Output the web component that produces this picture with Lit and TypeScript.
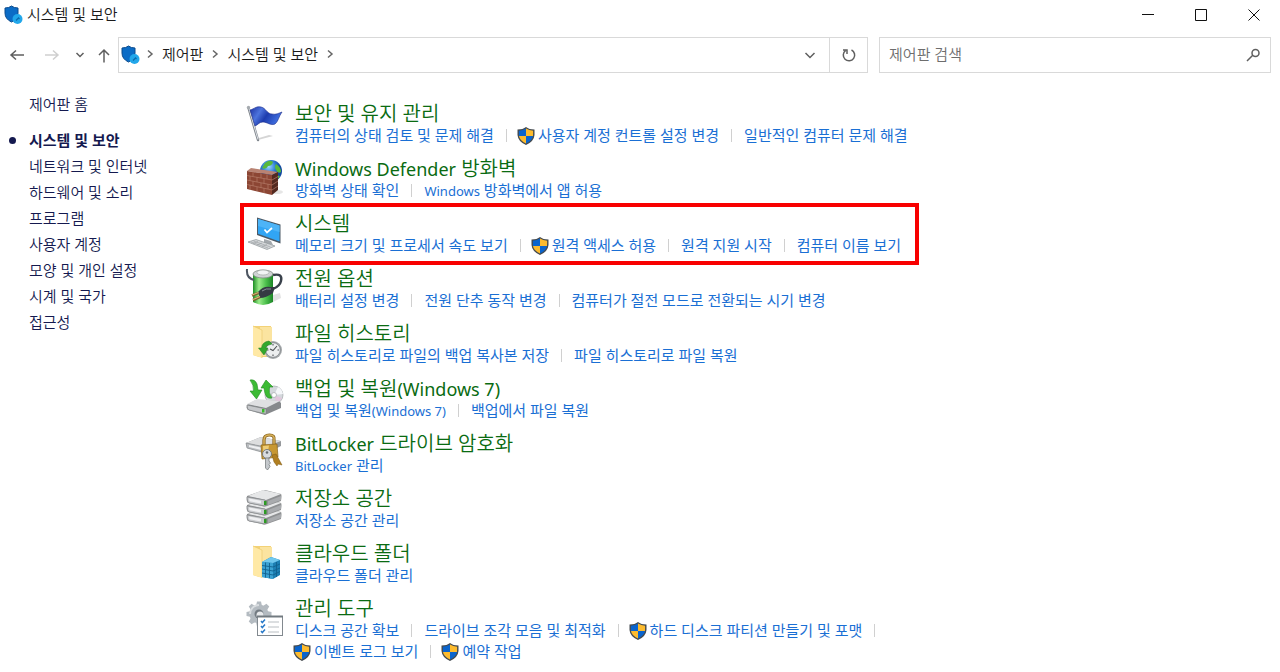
import { LitElement, html, svg, css, nothing } from "lit";
import { customElement, property } from "lit/decorators.js";

interface Task {
  text: string;
  shield?: boolean;
}

interface Category {
  icon: string;
  title: string;
  tasks: Task[];
  marked?: boolean;
}

const sections = [
  "시스템 및 보안",
  "네트워크 및 인터넷",
  "하드웨어 및 소리",
  "프로그램",
  "사용자 계정",
  "모양 및 개인 설정",
  "시계 및 국가",
  "접근성",
];

const categories: Category[] = [
  {
    icon: "flag",
    title: "보안 및 유지 관리",
    tasks: [
      { text: "컴퓨터의 상태 검토 및 문제 해결" },
      { text: "사용자 계정 컨트롤 설정 변경", shield: true },
      { text: "일반적인 컴퓨터 문제 해결" },
    ],
  },
  {
    icon: "firewall",
    title: "Windows Defender 방화벽",
    tasks: [{ text: "방화벽 상태 확인" }, { text: "Windows 방화벽에서 앱 허용" }],
  },
  {
    icon: "system",
    title: "시스템",
    marked: true,
    tasks: [
      { text: "메모리 크기 및 프로세서 속도 보기" },
      { text: "원격 액세스 허용", shield: true },
      { text: "원격 지원 시작" },
      { text: "컴퓨터 이름 보기" },
    ],
  },
  {
    icon: "power",
    title: "전원 옵션",
    tasks: [
      { text: "배터리 설정 변경" },
      { text: "전원 단추 동작 변경" },
      { text: "컴퓨터가 절전 모드로 전환되는 시기 변경" },
    ],
  },
  {
    icon: "history",
    title: "파일 히스토리",
    tasks: [
      { text: "파일 히스토리로 파일의 백업 복사본 저장" },
      { text: "파일 히스토리로 파일 복원" },
    ],
  },
  {
    icon: "backup",
    title: "백업 및 복원(Windows 7)",
    tasks: [{ text: "백업 및 복원(Windows 7)" }, { text: "백업에서 파일 복원" }],
  },
  {
    icon: "bitlocker",
    title: "BitLocker 드라이브 암호화",
    tasks: [{ text: "BitLocker 관리" }],
  },
  { icon: "storage", title: "저장소 공간", tasks: [{ text: "저장소 공간 관리" }] },
  { icon: "cloud", title: "클라우드 폴더", tasks: [{ text: "클라우드 폴더 관리" }] },
  {
    icon: "tools",
    title: "관리 도구",
    tasks: [
      { text: "디스크 공간 확보" },
      { text: "드라이브 조각 모음 및 최적화" },
      { text: "하드 디스크 파티션 만들기 및 포맷", shield: true },
      { text: "이벤트 로그 보기", shield: true },
      { text: "예약 작업", shield: true },
    ],
  },
];

/* Latin runs are set a little smaller than the Hangul around them. */
const mixed = (text: string) =>
  text
    .split(/([A-Za-z0-9()]+(?: [A-Za-z0-9()]+)*)/)
    .filter((part) => part)
    .map((part) => (/[A-Za-z0-9]/.test(part) ? html`<span class="latin">${part}</span>` : part));

const folder = svg`
  <path d="M8 3H26V34H14L8 32Z" fill="#f3d277"/>
  <path d="M15 4H27V33H15Z" fill="#fbe4a0"/>
  <path d="M8 3L17 7V35L8 32Z" fill="#ffe9a6"/>
  <path d="M8 3L17 7V35" fill="none" stroke="#eccb70" stroke-width=".7"/>`;

const slab = (y: number) => svg`
  <path d="M2 ${y + 7}L16 ${y + 2}Q18 ${y + 1} 20 ${y + 1}L36 ${y + 5}Q37 ${y + 6} 36 ${y + 12}L22 ${y + 17}Q19 ${y + 18} 17 ${y + 17}L3 ${y + 14}Q1 ${y + 13} 2 ${y + 7}Z" fill="#8e9092"/>
  <path d="M3 ${y + 7}L18 ${y + 1}L36 ${y + 5}L21 ${y + 11}Z" fill="#e6e7e8"/>
  <path d="M2 ${y + 8}L20 ${y + 11}V${y + 17}L4 ${y + 14}Q2 ${y + 13} 2 ${y + 8}Z" fill="#c9cbce" stroke="#85888b" stroke-width=".7"/>
  <path d="M4 ${y + 9.5}L16 ${y + 11.7}V${y + 14.5}L4.500 ${y + 12.3}Z" fill="#eff0f2"/>
  <path d="M19 ${y + 12}h2.500v4h-2.500Z" fill="#2c9a23"/>
  <path d="M23 ${y + 12}L36 ${y + 7}V${y + 11}L23 ${y + 16}Z" fill="#a9abae"/>`;

const pictures: Record<string, unknown> = {
  flag: svg`
    <defs><linearGradient id="flagBlue" x1="0" x2="1" y1="0" y2=".4">
      <stop offset="0" stop-color="#1b2fa0"/><stop offset=".35" stop-color="#4d74dd"/>
      <stop offset=".6" stop-color="#1d3cae"/><stop offset="1" stop-color="#3f6fe0"/>
    </linearGradient></defs>
    <path d="M13 37L28 33L24 32L14 35Z" fill="#d5d5d5"/>
    <path d="M3.500 5L13 37" stroke="#7f858c" stroke-width="2.400" stroke-linecap="round"/>
    <path d="M3.800 5L13 36.500" stroke="#dfe3e7" stroke-width="1"/>
    <path d="M5 7C9 6 11 3 16 4C21 5 22 11 27 11C31 12 34 10 37 9C34 13 33 19 30 21C26 23 22 19 18 19C14 19 13 22 10 23Z" fill="url(#flagBlue)" stroke="#1b2c8c" stroke-width=".6"/>
    <circle cx="3.500" cy="4.500" r="1.700" fill="#a6abb0"/>`,
  firewall: svg`
    <defs><radialGradient id="globe" cx=".4" cy=".3"><stop offset="0" stop-color="#9ed8ff"/><stop offset=".6" stop-color="#2f7fd6"/><stop offset="1" stop-color="#1149a0"/></radialGradient></defs>
    <ellipse cx="32" cy="34" rx="6" ry="2" fill="#e6e6e6"/>
    <circle cx="26" cy="13" r="11" fill="url(#globe)"/>
    <path d="M20 5Q25 1 28 4Q27 8 23 8Q21 12 17 10ZM31 6Q36 9 36 14Q33 16 31 12Q29 9 31 6ZM30 17L35 18Q33 22 30 23Z" fill="#58b83c"/>
    <path d="M2 13L6 10L33 14L27 17Z" fill="#b98373"/>
    <path d="M27 17L33 14V32L27 37Z" fill="#542a20"/>
    <path d="M2 13L27 17V37L2 31Z" fill="#8c4634"/>
    <path d="M2 17.500L27 22M2 22L27 27M2 26.500L27 32M8 14V18.500M16 15.500V20M22 16.500V21M5 18V22.500M12 19V24M19 20.500V25.500M8 23V28M16 25V30M23 26V31M5 27V32M12 29V33M19 30V35M27 22L33 18.500M27 27L33 23M27 32L33 28" stroke="#b47b69" stroke-width=".7" fill="none"/>`,
  system: svg`
    <path d="M19 26L26 28L28 32L19 30Z" fill="#a4a9ad"/>
    <path d="M12 4.500L35.500 11.500V30.500L12 22Z" fill="#4d5a66"/>
    <path d="M13 6L34.500 12.500V28.500L13 20.800Z" fill="#31a5f4"/>
    <path d="M13 6L34.500 12.500V19L13 13Z" fill="#4db4f7"/>
    <path d="M19.500 16.500L22 19.500L27 15" fill="none" stroke="#fff" stroke-width="1.700"/>
    <path d="M3 29L11 26.500L30 33L22 36.500Z" fill="#d5d8da" stroke="#8d9397" stroke-width=".7"/>
    <path d="M6 29L23 35M8.500 28L25.500 34M8 30.500L13 28.500M12 32L17 30M17 33.500L22 31.500" stroke="#989da1" stroke-width=".6"/>`,
  power: svg`
    <defs><linearGradient id="cell"><stop offset="0" stop-color="#1c8f23"/><stop offset=".3" stop-color="#9bec8b"/><stop offset=".65" stop-color="#4cc04c"/><stop offset="1" stop-color="#1b8426"/></linearGradient></defs>
    <path d="M28 34L36 30L35 25L28 27Z" fill="#e2e2e2"/>
    <path d="M8 6V34Q18 40 28 34V6Z" fill="url(#cell)"/>
    <ellipse cx="18" cy="6" rx="10" ry="4" fill="#cfd3d4" stroke="#7f8a83" stroke-width=".8"/>
    <ellipse cx="18" cy="4.500" rx="6" ry="2.500" fill="#f2f4f5" stroke="#9da5a0" stroke-width=".6"/>
    <path d="M2 1Q1 10 9 12" fill="none" stroke="#4d5661" stroke-width="2"/>
    <path d="M28 7Q38 5 36 13Q35 18 28 21" fill="none" stroke="#39414b" stroke-width="2.400"/>
    <path d="M13 24Q18 18 25 19L30 19L28 25Q21 30 15 30Z" fill="#353a43"/>
    <path d="M17 23Q21 20 26 21" stroke="#868d97" stroke-width="1" fill="none"/>
    <path d="M13.500 25L7 27.500M15 29L8 32" stroke="#7d5d2b" stroke-width="2.600"/>
    <path d="M13.500 24.600L7 27M15 28.600L8 31.500" stroke="#d7b878" stroke-width="1.100"/>`,
  history: svg`${folder}
    <circle cx="28" cy="27" r="9" fill="#a5a9ab"/>
    <circle cx="28" cy="27" r="7.300" fill="#eceeef" stroke="#74797c" stroke-width=".7"/>
    <path d="M28 21v1.500M28 31.500V33M22 27h1.500M32.500 27H34M32 23L28 27.500L25 26" stroke="#4d5154" stroke-width="1.100" fill="none"/>
    <path d="M24 18Q17 19 16.500 25H13.500L19 32L23 25H20.500Q21 22 27 21Z" fill="#34a82c" stroke="#1d7d1c" stroke-width=".5"/>`,
  backup: svg`
    <circle cx="29" cy="17" r="9" fill="#d4d8dc" stroke="#a4a8ab" stroke-width=".7"/>
    <path d="M29 17L33 9Q37 11 38 16Z" fill="#f6f7fa"/><path d="M29 17L37 20Q35 24 31 25.500Z" fill="#e3c6dc"/>
    <circle cx="29" cy="17" r="2.500" fill="#fff" stroke="#a4a8ab" stroke-width=".7"/>
    <path d="M2 27L11 22L34 23L36 25V30L20 37L3 32Q1 31 2 27Z" fill="#86898c"/>
    <path d="M2 26L12 21L35 23L21 30Z" fill="#dfe0e2"/>
    <path d="M2 27L21 31V36L4 32Q2 31 2 27Z" fill="#c6c8cb" stroke="#7a7d80" stroke-width=".6"/>
    <path d="M17 31h2.500v3.500h-2.500Z" fill="#38ba28"/>
    <path d="M5 2Q10 1 12 6L13 12H17L11.500 21L5 13H8.500Q9 7 5 2Z" fill="#3cbb34" stroke="#208b20" stroke-width=".6"/>
    <path d="M16 10L21 2L28 9H24.500Q23 15 27 20Q20 22 19 10Z" fill="#3cbb34" stroke="#208b20" stroke-width=".6"/>`,
  bitlocker: svg`
    <path d="M1 10L16 4L36 8V13L22 20L2 15Z" fill="#96999c"/>
    <path d="M1 10L16 4L36 8L20 14Z" fill="#dddedf"/>
    <path d="M1 10L20 14V20L2 15Z" fill="#b9bcbf" stroke="#84888b" stroke-width=".6"/>
    <path d="M4 12L16 14.500V17L4 14Z" fill="#eff0f2"/>
    <path d="M19 14V7Q19 2 24.500 2T29 7V14" fill="none" stroke="#8b641b" stroke-width="3.200"/>
    <path d="M19 14V7Q19 2 24.500 2T29 7V14" fill="none" stroke="#d7b25d" stroke-width="1.500"/>
    <path d="M16 12L32 11L33 24L17 26Z" fill="#c79732" stroke="#8a641c" stroke-width=".7"/>
    <path d="M18 13L24 12.500L22 24L18.500 24.500Z" fill="#edcd77"/>
    <path d="M27 22L31 21L37 32L33 31L32 33L29 29Z" fill="#b17f21" stroke="#7d5813" stroke-width=".5"/>
    <circle cx="22" cy="21" r="4.500" fill="#d9dcdf" stroke="#6d7276" stroke-width=".9"/>
    <circle cx="22" cy="19.500" r="1.300" fill="#666b70"/>
    <path d="M20.500 25H24V28L25.500 30L24 31.500L25 33.500L22.500 37L20.500 35Z" fill="#c4c8cc" stroke="#6d7276" stroke-width=".7"/>`,
  storage: svg`${slab(19)}${slab(10)}${slab(1)}`,
  cloud: svg`${folder}
    <path d="M17 19L26 14L35 17V32L28 36L17 34Z" fill="#1c7fb3"/>
    <path d="M17 19L26 14L35 17L28 20Z" fill="#70c8ee"/>
    <path d="M17 19L28 20V36L17 34Z" fill="#3ba3d3"/>
    <path d="M17 22.500L28 24L35 21M17 26L28 28L35 25M17 30L28 32L35 28.500M20.500 19.500V34.500M24.500 20V35M31.500 19V34" stroke="#10618f" stroke-width=".9" fill="none"/>`,
  tools: svg`
    <g fill="#b4bbc1"><circle cx="14" cy="16" r="9.500"/>
      ${[0, 45, 90, 135, 180, 225, 270, 315].map(
        (turn) => svg`<path d="M11 8L12 3.500H16L17 8Z" transform="rotate(${turn} 14 16)"/>`,
      )}</g>
    <path d="M5 16A9 9 0 0 1 14 7" stroke="#d9dde0" stroke-width="2" fill="none"/>
    <circle cx="14" cy="16" r="4.500" fill="#737b82"/><circle cx="15" cy="17" r="3.500" fill="#e8eaec"/>
    <rect x="12.500" y="18.500" width="25" height="19" fill="#fff" stroke="#82898f"/>
    <path d="M12 18.500H38" stroke="#727a80" stroke-width="2"/>
    <path d="M16 23l1.300 1.500L20 21.500M16 28l1.300 1.500L20 26.500M16 33l1.300 1.500L20 31.500" fill="none" stroke="#2879c8" stroke-width="1.500"/>
    <path d="M23 24H34M23 29H34M23 34H34" stroke="#b9bec2" stroke-width="1"/>`,
};

const securityIcon = html`<svg class="security" viewBox="0 0 20 20" aria-hidden="true">
  <path d="M1 3Q5 3 7.500 1Q10 3 14 3V8Q14 14 7.500 17Q1 14 1 8Z" fill="#0b6cc6" stroke="#0a4a8c" stroke-width="1"/>
  <circle cx="13.500" cy="14" r="5" fill="#22a7ea"/>
  <path d="M12 15.500L14.500 13M14 12.500l1.500 1.500" fill="none" stroke="#0b6cae" stroke-width="1.300"/>
</svg>`;

const shieldIcon = html`<svg class="shield" viewBox="0 0 18 20" aria-hidden="true">
  <path d="M0.500 3.500Q6 3.500 9 1Q12 3.500 17.500 3.500V9Q17 15.500 9 19Q1 15.500 0.500 9Z" fill="#454b50"/>
  <path d="M1.900 4.700Q6 4.600 9 2.500V10H2Q1.800 7 1.900 4.700Z" fill="#0a64cd"/>
  <path d="M9 2.500Q12 4.600 16.100 4.700Q16.200 7 16 10H9Z" fill="#fdbb2e"/>
  <path d="M2 10H9V17.500Q2.800 14.800 2 10Z" fill="#fdbb2e"/>
  <path d="M9 10H16Q15.200 14.800 9 17.500Z" fill="#0a64cd"/>
</svg>`;

const glyph = (d: string) =>
  html`<svg class="glyph" viewBox="0 0 16 16" aria-hidden="true"><path d=${d} /></svg>`;

const crumbArrow = html`<svg class="crumb-arrow" viewBox="0 0 8 12" aria-hidden="true">
  <path d="M2 2.500L6 6L2 9.500" />
</svg>`;

const shared = css`
  :host {
    display: block;
    font-family: "Noto Sans", "Noto Sans CJK KR", sans-serif;
    font-size: 15px;
  }
  * {
    box-sizing: border-box;
  }
  a {
    color: inherit;
    text-decoration: none;
  }
  a:hover {
    text-decoration: underline;
  }
  svg {
    display: block;
    flex: none;
  }
`;

@customElement("category-item")
export class CategoryItem extends LitElement {
  @property({ attribute: false }) category!: Category;

  static styles = [
    shared,
    css`
      .item {
        position: relative;
        display: flex;
        gap: 10px;
        width: fit-content;
      }
      .marked::after {
        content: "";
        position: absolute;
        inset: -10px -18px -9px -5px;
        border: 4px solid #f80000;
        pointer-events: none;
      }
      .picture {
        width: 40px;
        height: 40px;
      }
      h2 {
        margin: 0;
        font-size: 20px;
        line-height: 22px;
        font-weight: 350;
        color: #0a6b12;
      }
      .latin {
        line-height: 1;
      }
      h2 .latin {
        font-size: 18px;
        font-weight: 400;
      }
      ul {
        display: flex;
        flex-wrap: wrap;
        max-width: 660px;
        margin: 0;
        padding: 0;
        list-style: none;
        line-height: 21px;
        color: #1a6fd4;
      }
      li,
      a {
        display: flex;
        align-items: center;
        white-space: pre;
      }
      h2 a {
        display: inline;
      }
      ul .latin {
        font-size: 13px;
      }
      .divided::after {
        content: "";
        width: 1px;
        height: 13px;
        margin: 0 12px;
        background: #d0d0d0;
      }
      .shield {
        width: 18px;
        height: 20px;
        margin: 0 3px 0 -2px;
      }
    `,
  ];

  render() {
    const { icon, title, tasks, marked } = this.category;
    return html`<section class="item ${marked ? "marked" : ""}">
      <svg class="picture" viewBox="0 0 40 40" aria-hidden="true">${pictures[icon]}</svg>
      <div>
        <h2><a href="#">${mixed(title)}</a></h2>
        <ul>
          ${tasks.map(
            (task, i) => html`<li class=${i < tasks.length - 1 ? "divided" : ""}>
              <a href="#">${task.shield ? shieldIcon : nothing}<span>${mixed(task.text)}</span></a>
            </li>`,
          )}
        </ul>
      </div>
    </section>`;
  }
}

@customElement("app-root")
export class AppRoot extends LitElement {
  static styles = [
    shared,
    css`
      :host {
        min-height: 100vh;
        background: #fff;
        color: #1a1a1a;
      }
      button {
        display: flex;
        align-items: center;
        justify-content: center;
        padding: 0;
        border: 0;
        background: none;
        color: #5f5f5f;
      }
      .security {
        width: 20px;
        height: 20px;
      }
      .titlebar {
        display: flex;
        align-items: center;
        height: 30px;
        padding-left: 4px;
      }
      h1 {
        flex: 1;
        margin: 0;
        padding: 0 0 3px 3px;
        font-size: 15px;
        font-weight: 350;
      }
      .titlebar button {
        width: 53px;
        height: 30px;
        color: #111;
      }
      .glyph {
        width: 16px;
        height: 16px;
        fill: none;
        stroke: currentColor;
      }
      .toolbar {
        display: flex;
        padding: 7px 9px 0 0;
      }
      .history {
        display: grid;
        grid-template-columns: 34px 36px 20px 28px;
      }
      .history .glyph,
      .address button .glyph,
      .search .glyph {
        stroke-width: 1.5;
      }
      button:disabled {
        color: #cfcfcf;
      }
      .address,
      .search {
        display: flex;
        align-items: center;
        height: 36px;
        border: 1px solid #d9d9d9;
      }
      .address {
        flex: 750;
        padding-left: 2px;
        margin-right: 11px;
      }
      .crumbs {
        flex: 1;
        display: flex;
        align-items: center;
        gap: 8px;
        padding: 0 0 3px 5px;
        font-weight: 350;
      }
      .crumb-arrow {
        width: 8px;
        height: 12px;
        fill: none;
        stroke: #666;
        stroke-width: 1.5;
      }
      .address button {
        width: 38px;
        height: 34px;
      }
      .address .refresh {
        border-left: 1px solid #d9d9d9;
      }
      .search {
        flex: 392;
      }
      .search input {
        flex: 1;
        min-width: 0;
        height: 34px;
        padding: 0 9px 3px;
        border: 0;
        outline: 0;
        background: none;
        font: inherit;
        font-weight: 350;
      }
      .search input::placeholder {
        color: #6d6d6d;
        opacity: 1;
      }
      .search button {
        width: 34px;
        height: 34px;
      }
      .body {
        display: grid;
        grid-template-columns: 245px 1fr;
      }
      aside {
        padding: 18px 0 0 29px;
        line-height: 26px;
        font-weight: 350;
        color: #14194f;
      }
      .home {
        display: block;
        margin-bottom: 10px;
      }
      aside ul {
        margin: 0;
        padding: 0;
        list-style: none;
      }
      .current {
        position: relative;
        font-weight: 600;
      }
      .current::before {
        content: "";
        position: absolute;
        left: -20px;
        top: 10px;
        width: 7px;
        height: 7px;
        border-radius: 50%;
        background: #14194f;
      }
      main {
        display: flex;
        flex-direction: column;
        gap: 12px;
        padding: 30px 16px 8px 0;
      }
    `,
  ];

  render() {
    return html`
      <header>
        <div class="titlebar">
          ${securityIcon}
          <h1>시스템 및 보안</h1>
          <button aria-label="최소화">${glyph("M2 7.500H14")}</button>
          <button aria-label="최대화">${glyph("M2.500 2.500H13.500V13.500H2.500Z")}</button>
          <button aria-label="닫기">${glyph("M2.500 2.500L13.500 13.500M13.500 2.500L2.500 13.500")}</button>
        </div>
        <div class="toolbar">
          <nav class="history">
            <button aria-label="뒤로">${glyph("M15 8H2M7 3.500L2 8L7 12.500")}</button>
            <button aria-label="앞으로" disabled>${glyph("M1 8H14M9 3.500L14 8L9 12.500")}</button>
            <button aria-label="최근 위치">${glyph("M4.500 6L8 9.500L11.500 6")}</button>
            <button aria-label="위로">${glyph("M8 15.500V3M3 8L8 3L13 8")}</button>
          </nav>
          <div class="address">
            ${securityIcon}
            <nav class="crumbs">
              ${crumbArrow}<a href="#">제어판</a>${crumbArrow}<a href="#">시스템 및 보안</a>${crumbArrow}
            </nav>
            <button aria-label="이전 위치">${glyph("M3.500 6L8 10.500L12.500 6")}</button>
            <button class="refresh" aria-label="새로 고침">
              ${glyph("M10.500 3A5.700 5.700 0 1 1 4.500 3.600M2 3H6V7")}
            </button>
          </div>
          <form class="search">
            <input type="search" aria-label="제어판 검색" placeholder="제어판 검색" />
            <button type="button" aria-label="검색">
              ${glyph("M7.500 8.500L2 14M7 6A3.500 3.500 0 1 0 14 6A3.500 3.500 0 1 0 7 6")}
            </button>
          </form>
        </div>
      </header>
      <div class="body">
        <aside>
          <a class="home" href="#">제어판 홈</a>
          <ul>
            ${sections.map(
              (name, i) => html`<li class=${i === 0 ? "current" : ""}><a href="#">${name}</a></li>`,
            )}
          </ul>
        </aside>
        <main>
          ${categories.map((category) => html`<category-item .category=${category}></category-item>`)}
        </main>
      </div>
    `;
  }
}
